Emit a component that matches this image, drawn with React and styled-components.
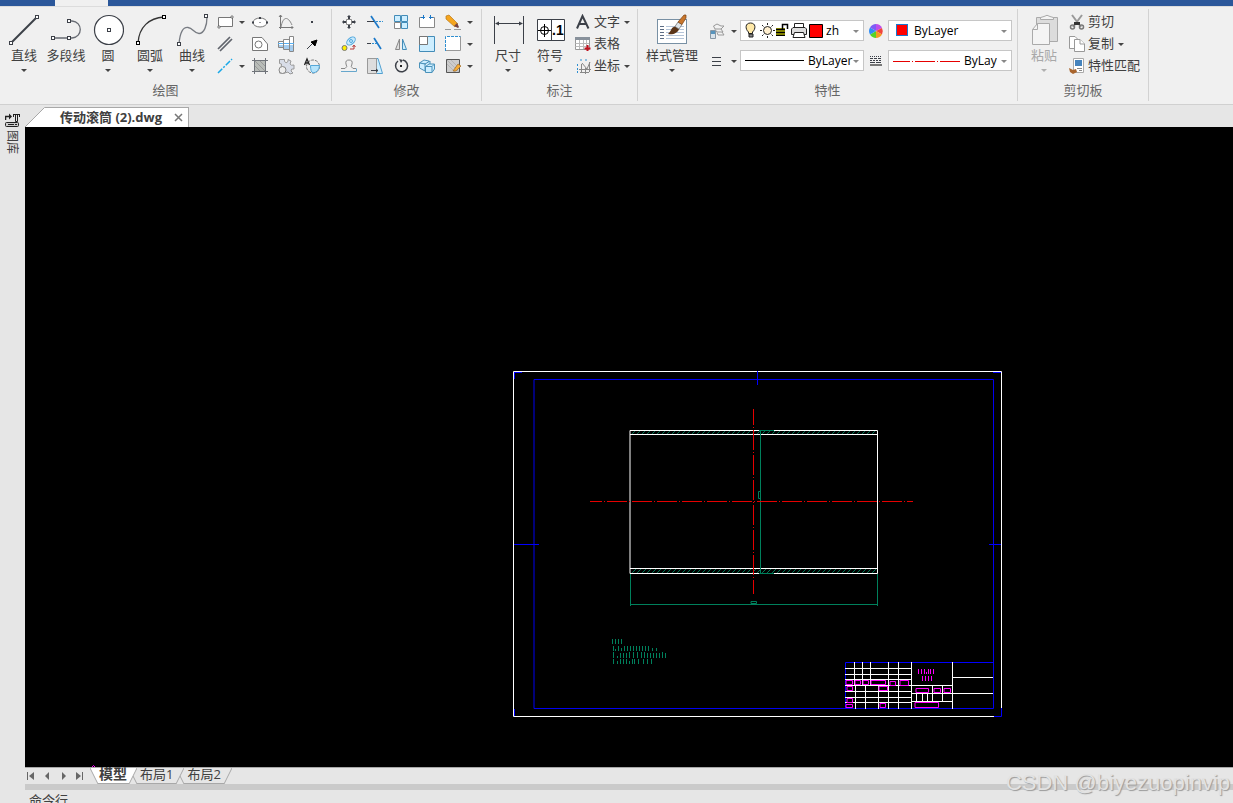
import React from 'react';
import styled, { createGlobalStyle, css } from 'styled-components';

const GlobalStyle = createGlobalStyle`
    * {
        box-sizing: border-box;
    }

    body {
        margin: 0;
        background: #e6e6e6;
        color: #404040;
        font-family: "Open Sans", "Noto Sans CJK SC", sans-serif;
        font-size: 13px;
    }

    button, select {
        font: inherit;
        color: inherit;
        background: none;
        border: 0;
        padding: 0;
    }

    svg {
        display: block;
        flex: none;
    }
`;

const Page = styled.div`
    display: flex;
    flex-direction: column;
    height: 100vh;
    overflow: hidden;
    position: relative;
`;

/* RIBBON */

const TitleStrip = styled.div`
    flex: none;
    height: 6px;
    padding-left: 55px;
    background: #2b579a;
`;

const ActiveMark = styled.div`
    width: 53px;
    height: 6px;
    background: #f0f0f0;
`;

const Ribbon = styled.header`
    display: flex;
    flex: none;
    padding: 2px 0 3px;
    background: #f0f0f0;
    border-top: 1px solid #dcdcdc;
    border-bottom: 1px solid #d0d0d0;
`;

const Group = styled.section`
    display: flex;
    flex-direction: column;
    border-right: 1px solid #d2d2d2;
`;

const GroupBody = styled.div`
    display: flex;
    height: 72px;
    padding: 0 ${props => props.$right}px 0 ${props => props.$left}px;
`;

const GroupTitle = styled.h2`
    margin: 0;
    padding-bottom: 2px;
    font-size: 13px;
    font-weight: 400;
    line-height: 18px;
    text-align: center;
    color: #666;
`;

const BigButton = styled.button`
    display: flex;
    flex-direction: column;
    align-items: center;
    width: ${props => (props.$wide ? 68 : 42)}px;
    padding-top: 5px;
    line-height: 18px;
    white-space: nowrap;

    svg + svg {
        margin-top: 2px;
    }

    &:disabled {
        color: #a8a8a8;
    }
`;

const IconGrid = styled.div`
    display: grid;
    grid-template-columns: ${props => props.$columns};
    grid-auto-rows: 22px;
    padding-top: 2px;
`;

const IconButton = styled.button`
    display: flex;
    align-items: center;
    justify-content: center;
`;

const RowList = styled.div`
    display: flex;
    flex-direction: column;
    padding: 2px 0 0 4px;
`;

const RowButton = styled.button`
    display: flex;
    align-items: center;
    height: 22px;
    line-height: 18px;
    white-space: nowrap;

    span {
        margin: 0 4px 2px 3px;
    }

    span:last-child {
        margin-right: 0;
    }
`;

const PropGrid = styled.div`
    display: grid;
    grid-template-columns: 22px 12px 124px 24px 124px;
    grid-auto-rows: 21px;
    row-gap: 9px;
    padding-top: 11px;
`;

const Combo = styled.label`
    display: flex;
    align-items: center;
    padding: 0 4px;
    background: #fff;
    border: 1px solid #c6c6c6;
    overflow: hidden;

    select {
        flex: 1;
        min-width: 0;
        margin-left: ${props => props.$gap}px;
        margin-right: ${props => props.$end || 0}px;
        appearance: none;
        font-size: 12px;
        line-height: 18px;
        color: #000;
        outline: none;
    }
`;

/* WORK AREA */

const Work = styled.div`
    display: flex;
    flex: 1;
    min-height: 0;
`;

const Rail = styled.aside`
    flex: none;
    width: 25px;
    padding-top: 7px;
`;

const RailButton = styled.button`
    display: flex;
    flex-direction: column;
    align-items: center;
    gap: 2px;

    /* square box, so the turned label keeps its place in the column */
    span {
        width: 24px;
        height: 24px;
        font-size: 12px;
        line-height: 24px;
        transform: rotate(90deg);
    }
`;

const Main = styled.main`
    display: flex;
    flex-direction: column;
    flex: 1;
    min-width: 0;
`;

const FileTabs = styled.div`
    display: flex;
    flex: none;
    align-items: flex-end;
    height: 22px;
`;

const FileTab = styled.div`
    display: flex;
    align-items: center;
    gap: 12px;
    height: 20px;
    padding: 0 5px 2px 15px;
    background: #fff;
    border-top: 1px solid #a8a8a8;
    border-right: 1px solid #a8a8a8;
    font-weight: 700;
    line-height: 16px;
    white-space: nowrap;

    button {
        padding-top: 2px;
    }
`;

const Canvas = styled.div`
    flex: 1;
    min-height: 0;
    background: #000;
    overflow: hidden;

    svg {
        width: 100%;
        height: 100%;
    }
`;

const SheetBar = styled.div`
    display: flex;
    flex: none;
    height: 17px;
    border-top: 1px solid #a8a8a8;
`;

const SheetNav = styled.div`
    display: flex;
    align-items: center;
    width: 65px;
`;

const SheetNavButton = styled.button`
    display: flex;
    width: 16px;
    padding-left: 1px;
`;

const SheetTab = styled.button`
    display: flex;
    height: 16px;

    span {
        height: 16px;
        padding: 0 3px;
        line-height: 12px;
        border-bottom: 1px solid #a8a8a8;
        white-space: nowrap;
    }

    & + & {
        margin-left: -4px;
    }

    ${props => props.$active && css`
        font-size: 14px;
        font-weight: 700;

        span {
            padding: 0 2px 0 1px;
            background: #fff;
        }
    `}
`;

const Splitter = styled.div`
    flex: none;
    height: 6px;
    background: #cacaca;
`;

const CommandLine = styled.footer`
    flex: none;
    height: 13px;
    padding-left: 4px;
    line-height: 20px;
    overflow: hidden;
`;

const Watermark = styled.div`
    position: absolute;
    right: 3px;
    bottom: 6px;
    font-family: "Liberation Sans", sans-serif;
    font-size: 22px;
    line-height: 28px;
    color: #e2e2e2;
    text-shadow: 1px 1px 1px #999;
    pointer-events: none;
`;

/* ICONS */

const DARK = '#3c4048';
const BLUE = '#2f8fd0';
const PALE = '#cdeeff';

const Icon = ({ size = 20, children }) => (
    <svg width={size} height={size} viewBox={`0 0 ${size} ${size}`} fill="none" stroke={DARK} aria-hidden="true">
        {children}
    </svg>
);

const Arrow = ({ color = '#444' }) => (
    <svg width="6" height="8" viewBox="0 0 6 8" fill={color} aria-hidden="true">
        <path d="M0 3H6L3 6Z" />
    </svg>
);

// little square handles at the ends of the curves
const Node = ({ x, y }) => <rect x={x - 1.5} y={y - 1.5} width="3" height="3" fill="#fff" />;

const big = {
    line: <><path d="M3.500 28.500L28.500 3.500" strokeWidth="2" /><Node x={3} y={29} /><Node x={29} y={3} /></>,
    polyline: <><path d="M3 24H19M19 7H22C33 8 33 23 22 24H19" stroke="#666a72" strokeWidth="1.300" /><Node x={19} y={7} /><Node x={3} y={24} /><Node x={19} y={24} /></>,
    circle: <><circle cx="17" cy="16" r="14.500" fill="#fff" strokeWidth="1.200" /><Node x={17} y={16} /></>,
    arc: <><path d="M4 29C5 13 15 4 30 3" stroke="#333" strokeWidth="1.300" /><g stroke="#000"><Node x={4} y={29} /><Node x={30} y={3} /></g></>,
    spline: <><path d="M3 30C4 18 7 13 12 13.500C17 14 18 19.500 23 19.500C28 19.500 31 12 31 3" stroke="#777b82" strokeWidth="1.300" /><Node x={3} y={30} /><Node x={30} y={2} /></>,
    dim: (
        <>
            <path d="M2.500 2V30M31.500 2V30M4 9.500H30" />
            <path d="M3 9.500L7 7.500V11.500ZM31 9.500L27 7.500V11.500Z" fill={DARK} stroke="none" />
        </>
    ),
    symbol: (
        <>
            <path d="M3.500 5.500H30.500V26.500H3.500ZM17.500 5.500V26.500" fill="#fff" />
            <circle cx="10.500" cy="16.500" r="4" stroke="#000" />
            <path d="M4 16.500H17M10.500 10V23" stroke="#000" />
            <text x="18" y="21" fontSize="14" fontWeight="700" fontFamily="Liberation Sans, sans-serif" fill="#000" stroke="none">.1</text>
        </>
    ),
    style: (
        <>
            <rect x="1.500" y="5.500" width="29" height="24" fill="#fff" stroke="#7890a4" />
            <path d="M4 12.500H8M4 15.500H8M4 18.500H8M4 21.500H8M4 24.500H8" stroke="#5c6c84" />
            <path d="M10 12.500H28M10 15.500H28M10 18.500H28M10 21.500H28M10 24.500H28" stroke="#b4c4d8" />
            <path d="M12 20C15 18 15 13 19 12.500L23 15C22 19 17 21 12 20Z" fill="#5a3418" stroke="none" />
            <path d="M19 12.500L22 8L26 10.500L23 15Z" fill="#dfe4e8" stroke="#666" strokeWidth="0.700" />
            <path d="M22 8L28 1H30V4L26 10.500Z" fill="#c8762c" stroke="#7a4012" strokeWidth="0.700" />
        </>
    ),
    paste: (
        <g stroke="#aaa">
            <path d="M8.500 3.500H29.500V27.500H8.500Z" fill="#dcdcdc" />
            <path d="M12.500 5.500V3.500L16 2.500Q19 0 22 2.500L25.500 3.500V5.500Z" fill="#f4f4f4" />
            <path d="M9.500 9.500H21.500V30.500H4.500V15.500Z" fill="#f4f4f4" />
            <path d="M9.500 9.500V15.500H4.500" />
        </g>
    ),
};

const draw = {
    rect: <><path d="M3.500 5.500H17.500V14.500H3.500Z" fill="#fff" stroke="#777" /><path d="M16 4H18V6H16ZM3 14H5V16H3Z" fill="#fff" stroke="#555" strokeWidth="0.700" /></>,
    ellipse: <><ellipse cx="10" cy="10.500" rx="7" ry="4.500" fill="#fff" stroke="#777" /><path d="M2 9.500H4V11.500H2ZM16 9.500H18V11.500H16ZM9 5H11V7H9ZM9.500 10H10.500V11H9.500Z" fill={DARK} stroke="none" /></>,
    graph: <><path d="M4.500 3V17M3 15.500H17M3 5L4.500 3L6 5M15.500 14L17 15.500L15.500 17" stroke="#777" /><path d="M5 15C7 4 12 4 16 13" stroke="#888" /></>,
    point: <path d="M9 9H11V11H9Z" fill={DARK} stroke="none" />,
    double: <path d="M3 15L15 3M5 17L17 5" strokeWidth="1.700" stroke="#60646c" />,
    region: <><path d="M2.500 3.500H12L17.500 10V16.500H2.500Z" fill="#fff" stroke="#777" /><circle cx="8.500" cy="10.500" r="3.500" stroke="#777" /></>,
    shaft: <><path d="M2.500 7.500H7.500V5.500H13.500V2.500H17.500V17.500H13.500V15.500H7.500V13.500H2.500Z" fill="#fff" stroke="#888" /><path d="M3 11H17V17H14V15H8V13H3Z" fill="#a5cdef" stroke="none" /><path d="M2 9.500H18" stroke="#56aef0" /><path d="M7.500 6V15M13.500 3V17" stroke="#888" /></>,
    ray: <><path d="M5 15L11 9" /><path d="M15 6L13 12L9 8Z" fill="#000" stroke="#000" /></>,
    xline: <path d="M3 17L17 3" stroke="#18a8e8" strokeWidth="1.500" strokeDasharray="6 1.500 2 1.500" />,
    hatch: <><path d="M5 5H15V15H5Z" fill="#b8bcb8" stroke="none" /><path d="M5 10L10 15M5 5L15 15M10 5L15 10" stroke="#999" /><path d="M4.500 2V18M15.500 2V18M2 4.500H18M2 15.500H18" stroke="#70747a" /></>,
    gear: <><path d="M3.500 7.500V3.500H8.500V5.500Q10 8 12 5.500V3.500L15 5L14 8Q15 10 18 9V13Q15 12 15 15L17 17L14 18L12 16Q8 18 3.500 17V13Q6 11 5.500 8Z" fill="#d8dde8" stroke="#999" /><circle cx="6.500" cy="14" r="3.500" fill="#eee" stroke="#888" /></>,
    block: <><circle cx="11" cy="10.500" r="6.500" stroke="#777" strokeDasharray="3 1" /><path d="M8.500 9.500H17.500Q17 16 11 17Q8.500 16 8.500 9.500Z" fill="#b6e4fb" stroke="#56a8d8" /><path d="M2.500 9L5 3L7.500 9M3.500 7H6.500" stroke="#222" strokeWidth="1.300" /></>,
};

const modify = {
    move: <><path d="M7.500 7.500H12.500V12.500H7.500Z" stroke="#888" fill="#fff" /><path d="M10 3L12 5H11V7H9V5H8ZM10 17L12 15H11V13H9V15H8ZM3 10L5 8V9H7V11H5V12ZM17 10L15 8V9H13V11H15V12Z" fill={DARK} stroke="none" /></>,
    trim: <><path d="M6 4L14 16" stroke="#1b78c8" strokeWidth="1.700" /><path d="M2 9.500H9" /><path d="M11 9.500H18" stroke={BLUE} strokeDasharray="2 1" /></>,
    array: <><path d="M3.500 3.500H9.500V9.500H3.500ZM10.500 3.500H16.500V9.500H10.500ZM10.500 10.500H16.500V16.500H10.500Z" fill={PALE} stroke="#438cb8" /><path d="M3.500 10.500H9.500V16.500H3.500Z" fill="#fff" stroke="#888" /></>,
    breakAt: <><path d="M7 5.500H2.500V15.500H17.500V5.500H13" fill="#fff" stroke="#888" /><path d="M4 5.500H8M12 5.500H16M6.500 3V7M13.500 3V7" stroke="#1b78c8" /></>,
    erase: <><path d="M3 4L6 3L15 12L12 15L3 7Z" fill="#f5a51e" stroke="#b97818" strokeWidth="0.700" /><path d="M11 14L14 11L16 15L15 16Z" fill="#744" stroke="none" /><path d="M2 17.500H8M11 17.500H18" stroke="#999" /></>,
    copy: <><circle cx="5.500" cy="14" r="2.500" fill="#fff000" stroke="#777" /><ellipse cx="12" cy="7" rx="5" ry="3" transform="rotate(-40 12 7)" fill="#c8eafd" stroke="#52a8dd" /><circle cx="12" cy="7" r="1.500" stroke="#52a8dd" /><path d="M11 15H15V12M13.500 13L15 11L16.500 13" stroke="#b73a3a" /></>,
    extend: <><path d="M9 4L16 15" stroke="#1b78c8" strokeWidth="1.700" /><path d="M2 9.500H6" /><path d="M7 9.500H12" stroke={BLUE} strokeDasharray="2 1" /></>,
    mirror: <><path d="M8.500 5V15.500H4.500Z" fill="#ddd" stroke="#888" /><path d="M11.500 5V15.500H15.500Z" fill={PALE} stroke="#438cb8" /></>,
    scale: <><path d="M2.500 2.500H17.500V17.500H2.500Z" fill={PALE} stroke="#438cb8" /><path d="M2.500 2.500H10.500V10.500H2.500Z" fill="#fff" stroke="#777" /></>,
    stretch: <><path d="M2.500 2.500H17.500V16.500H2.500Z" fill="#fff" stroke="none" /><path d="M17.500 2.500V16.500H2.500" stroke="#999" /><path d="M2.500 17V2.500H17.500" stroke={BLUE} strokeDasharray="3 1" /></>,
    offset: <><path d="M2 12.500H6Q9 11 7 8Q6 4 10 4Q14 4 13 8Q11 11 14 12.500H17" stroke="#888" /><path d="M2 15.500H17.500V12.500" stroke="#67a7cc" /></>,
    taper: <><path d="M11 2.500H13L17.500 17.500H10" fill={PALE} stroke="#52a0d0" /><path d="M2.500 2.500H11.500V17.500H2.500Z" fill="#ddd" stroke="#999" /><path d="M6 14.500H13M11 13L13 14.500L11 16" /></>,
    rotate: <><path d="M7 5A6 6 0 1 0 12 4" strokeWidth="1.500" /><path d="M8 3L12 4L10 7Z" fill={DARK} stroke="none" /><path d="M9 9H11V11H9Z" fill="#222" stroke="none" /></>,
    box: <g stroke="#4b92ba" fill={PALE}><path d="M2.500 7L7 4L12 5L9 8Z" /><path d="M2.500 7V12L8 15V8ZM8 8L13 5V9" /><path d="M8.500 10.500L12 8H17.500V13L15 16.500H8.500ZM8.500 10.500H15V16.500M15 10.500L17.500 8" /></g>,
    hatchEdit: <><path d="M3.500 3.500H16.500V16.500H3.500Z" fill="#ccc" stroke="#555" /><path d="M4 8L12 16M4 4L16 16M8 4L16 12" stroke="#b4b4b4" /><path d="M10 15L15 8L18 10L13 15Z" fill="#f5ad38" stroke="#9d6827" strokeWidth="0.700" /></>,
};

const small = {
    text: <path d="M2 14.500L7.500 2L13.500 14.500M4.500 10H11" strokeWidth="2" />,
    table: <><path d="M0.500 1.500H14.500V13.500H0.500Z" fill="#fff" stroke="#999" /><path d="M0 1H15V4H0Z" fill="#88919b" stroke="none" /><path d="M0.500 7.500H14M0.500 10.500H14M4.500 4V13M8.500 4V13M11.500 4V13" stroke="#bbb" /><path d="M12.500 9V15M9.500 12.500H15.500" stroke="#c1121f" strokeWidth="2" /></>,
    coord: <><path d="M2.500 6V9M2.500 10V15M5 2H7M10 2H13" stroke={BLUE} strokeDasharray="2 1" /><path d="M6.500 6V14M14.500 4V14M4 11.500H16M5 14.500H14M7 5L12 11L15 4M10.500 10V16" stroke="#888" /></>,
    cut: <><path d="M3 1L12 13M13 1L4 13" stroke="#999" strokeWidth="2" /><path d="M5 8H11V11H5Z" fill="#333" stroke="none" /><circle cx="3.500" cy="13" r="2" stroke="#777" strokeWidth="1.500" /><circle cx="12.500" cy="13" r="2" stroke="#777" strokeWidth="1.500" /></>,
    copy: <g stroke="#999" fill="#fff"><path d="M0.500 0.500H6L9.500 4V12.500H0.500Z" /><path d="M5.500 3.500H11L15.500 8V15.500H5.500Z" /><path d="M11 3.500V8H15.500" /></g>,
    match: <><path d="M4.500 0.500H14.500V14.500H4.500Z" fill="#fff" stroke="#aaa" /><path d="M6 2H13V8H6Z" fill="#4583bd" stroke="none" /><path d="M8 10.500H13M10 12.500H13" stroke="#888" /><path d="M0 10L4 12L7 11L8 14L4 16L1 14Z" fill="#a9652d" stroke="none" /></>,
    layer: <><path d="M4.500 3L8 1L12 3H15L12 6H6ZM6 6.500L8 9H14L12 6M8 9.500L9 12H15L13 9" fill="#f2f2f2" stroke="#999" /><path d="M1.500 7.500H6.500V15.500H1.500Z" fill="#d8e2ea" stroke="#8796a4" /><path d="M2 8H6V11H2Z" fill="#5794bd" stroke="none" /></>,
    weight: <path d="M3 4.500H12M3 8.500H12M3 12.500H12" />,
    lineType: <><path d="M2 3.500H14" strokeDasharray="1 1" /><path d="M2 5.500H14" strokeDasharray="3 1" /><path d="M2 7.500H14" strokeDasharray="2 1" /><path d="M2 9.500H14" strokeDasharray="5 1" /><path d="M2 12H14" strokeWidth="2" stroke="#777" /></>,
    wheel: (
        <g stroke="none">
            <path d="M8 8V1A7 7 0 0 1 14 5Z" fill="#c04de8" />
            <path d="M8 8L14 5A7 7 0 0 1 14 11.500Z" fill="#f1443c" />
            <path d="M8 8L14 11.500A7 7 0 0 1 8 15Z" fill="#f49b20" />
            <path d="M8 8V15A7 7 0 0 1 2 11.500Z" fill="#56d326" />
            <path d="M8 8L2 11.500A7 7 0 0 1 2 4.500Z" fill="#2f8df5" />
            <path d="M8 8L2 4.500A7 7 0 0 1 8 1Z" fill="#7e5cf5" />
        </g>
    ),
};

const LayerStates = () => (
    <svg width="79" height="19" viewBox="0 0 79 19" fill="none" stroke="#222" aria-hidden="true">
        <path d="M3.500 11C0 8 0 2 5.500 2C11 2 11 8 7.500 11V12.500H3.500Z" fill="#ffe9a8" />
        <path d="M4 13H8V16H4Z" fill="#888" />
        <circle cx="22.500" cy="9.500" r="4" fill="#ffefcf" />
        <path d="M22.500 2V4M22.500 15V17M15 9.500H17M28 9.500H30M17 4L18.500 5.500M28 4L26.500 5.500M17 15L18.500 13.500M28 15L26.500 13.500" />
        <path d="M31 7H40V15H31Z" fill="#808000" stroke="none" />
        <path d="M31 8.500H40M31 11.500H40M31 14.500H40" stroke="#000" />
        <path d="M37.500 8V3.500H42.500V8" stroke="#000" strokeWidth="1.500" />
        <path d="M49.500 6V2.500H58.500V6" fill="#fff" />
        <path d="M48 6.500H60L61.500 8V13.500H46.500V8Z" fill="#ddd" />
        <path d="M49.500 11.500H58.500L60 16.500H48Z" fill="#fff" />
        <path d="M64.500 3.500H77.500V16.500H64.500Z" fill="#f00" stroke="#000" />
    </svg>
);

/* CAD DRAWING */

const ticks = (y, h, xs) => xs.map(x => `M${x} ${y}v${h}`).join('');
const boxes = list => list.map(([x, y, w, h]) => `M${x} ${y}h${w}v${h}h${-w}z`).join('');

const hatching = (y, h) => {
    let d = '';
    for (let x = 632; x < 873; x += 5) {
        d += `M${x} ${y + h}l${h} ${-h}`;
    }
    return d;
};

const notes = [
    ticks(639, 4, [612, 615, 618, 621]),
    ticks(646, 4, [613, 618, 624, 627, 630, 633, 636, 639, 642, 645, 648]),
    ticks(648, 2, [621, 652, 656]) + ticks(649, 1, [615]),
    ticks(652, 5, [613, 629, 633, 637, 641, 644, 662]),
    ticks(653, 4, [620, 623, 626, 647, 650, 653, 656, 659, 665]) + ticks(656, 1, [617]),
    ticks(659, 4, [613, 620, 623, 626, 632, 634, 638, 643, 647, 651]) + ticks(661, 2, [617, 629]),
].join('');

const labels = [
    [846, 680, 6, 4], [855, 680, 5, 4], [863, 680, 5, 4], [871, 680, 14, 4], [890, 681, 5, 4],
    [900, 680, 8, 5], [847, 686, 5, 4], [879, 686, 8, 4], [847, 698, 5, 4], [846, 704, 6, 3],
    [880, 703, 5, 4], [916, 688, 12, 4], [934, 688, 6, 4], [944, 688, 6, 4], [915, 702, 23, 5],
];

const Drawing = () => (
    <svg role="img" aria-label="传动滚筒">
        <g transform="translate(-24.5 -126.5)" fill="none" strokeLinecap="square">
            <path stroke="#0000f0" d="M534 379H993V708H534Z" />
            <path stroke="#0000ff" d="M514 372H521M514 372V378M514 544H538M989 544H1000M993 372H1000M845 708V662H993" />
            <path stroke="#fff" d="M993 716H513V371H1001V707" />
            <path stroke="#0000ff" d="M757 371V384M1001 708V716H994M514 715V709" />
            <path stroke="#00805c" d={hatching(431, 2) + hatching(569, 3)} />
            <path stroke="#fff" d="M630 430H877V573H630ZM630 434H877M630 568H877" />
            <path stroke="#00805c" d="M760 430V573M759 430H773M759 573H773M760 491H758V498H760M630 574V605M877 574V605M630 604H877M751 601H756V603H751Z" />
            <path stroke="#e60000" strokeLinecap="butt" strokeDasharray="20 2 1 2" strokeDashoffset="8" d="M589.5 501H912.5" />
            <path stroke="#e60000" strokeLinecap="butt" strokeDasharray="20 2 1 2" strokeDashoffset="4" d="M753 408.5V593.5" />
            <path stroke="#00805c" d={notes} />
            <path
                stroke="#fff"
                d="M845 668H911M845 674H911M845 679H911M845 685H952M845 691H911M845 697H911M845 702H911
                   M854 662V685M862 662V685M870 662V685M888 662V708M898 662V708M911 662V708M952 662V708
                   M855 685V708M865 685V708M878 685V708M911 693H992M911 701H952M952 677H992
                   M916 693V701M922 693V701M927 693V701M932 685V701M942 685V701"
            />
            <path stroke="#f0f" d={boxes(labels) + ticks(669, 4, [918, 921, 924, 928, 930, 933]) + ticks(672, 1, [926]) + ticks(676, 4, [922, 925, 928, 931])} />
            <path stroke="#f0f" d="M91 767L93 765L95 767" />
        </g>
    </svg>
);

/* PARTS */

const BigTool = ({ icon, label, wide, noArrow, disabled }) => (
    <BigButton type="button" $wide={wide} disabled={disabled}>
        <Icon size={32}>{big[icon]}</Icon>
        {label}
        {!noArrow && <Arrow color={disabled ? '#b0b0b0' : undefined} />}
    </BigButton>
);

const Tool = ({ children, label }) => (
    <IconButton type="button" aria-label={label}>
        <Icon>{children}</Icon>
    </IconButton>
);

const More = ({ label = '更多' }) => (
    <IconButton type="button" aria-label={label}>
        <Arrow />
    </IconButton>
);

const RowTool = ({ icon, label, arrow }) => (
    <RowButton type="button">
        <Icon size={16}>{small[icon]}</Icon>
        <span>{label}</span>
        {arrow && <Arrow />}
    </RowButton>
);

const DrawGroup = () => (
    <Group>
        <GroupBody $left={3} $right={6}>
            <BigTool icon="line" label="直线" />
            <BigTool icon="polyline" label="多段线" noArrow />
            <BigTool icon="circle" label="圆" />
            <BigTool icon="arc" label="圆弧" />
            <BigTool icon="spline" label="曲线" />
            <IconGrid $columns="24px 10px 26px 26px 26px">
                <Tool label="矩形">{draw.rect}</Tool>
                <More />
                <Tool label="椭圆">{draw.ellipse}</Tool>
                <Tool label="公式曲线">{draw.graph}</Tool>
                <Tool label="点">{draw.point}</Tool>
                <Tool label="平行线">{draw.double}</Tool>
                <i />
                <Tool label="局部放大">{draw.region}</Tool>
                <Tool label="孔轴">{draw.shaft}</Tool>
                <Tool label="箭头">{draw.ray}</Tool>
                <Tool label="中心线">{draw.xline}</Tool>
                <More />
                <Tool label="剖面线">{draw.hatch}</Tool>
                <Tool label="齿轮">{draw.gear}</Tool>
                <Tool label="块">{draw.block}</Tool>
            </IconGrid>
        </GroupBody>
        <GroupTitle>绘图</GroupTitle>
    </Group>
);

const ModifyGroup = () => (
    <Group>
        <GroupBody $left={4} $right={7}>
            <IconGrid $columns="repeat(5, 26px) 8px">
                <Tool label="平移">{modify.move}</Tool>
                <Tool label="裁剪">{modify.trim}</Tool>
                <Tool label="阵列">{modify.array}</Tool>
                <Tool label="打断">{modify.breakAt}</Tool>
                <Tool label="删除">{modify.erase}</Tool>
                <More />
                <Tool label="平移复制">{modify.copy}</Tool>
                <Tool label="延伸">{modify.extend}</Tool>
                <Tool label="镜像">{modify.mirror}</Tool>
                <Tool label="缩放">{modify.scale}</Tool>
                <Tool label="拉伸">{modify.stretch}</Tool>
                <More />
                <Tool label="等距线">{modify.offset}</Tool>
                <Tool label="过渡">{modify.taper}</Tool>
                <Tool label="旋转">{modify.rotate}</Tool>
                <Tool label="分解">{modify.box}</Tool>
                <Tool label="编辑剖面线">{modify.hatchEdit}</Tool>
                <More />
            </IconGrid>
        </GroupBody>
        <GroupTitle>修改</GroupTitle>
    </Group>
);

const AnnotateGroup = () => (
    <Group>
        <GroupBody $left={5} $right={7}>
            <BigTool icon="dim" label="尺寸" />
            <BigTool icon="symbol" label="符号" />
            <RowList>
                <RowTool icon="text" label="文字" arrow />
                <RowTool icon="table" label="表格" />
                <RowTool icon="coord" label="坐标" arrow />
            </RowList>
        </GroupBody>
        <GroupTitle>标注</GroupTitle>
    </Group>
);

const PropertyGroup = () => (
    <Group>
        <GroupBody $left={0} $right={5}>
            <BigTool icon="style" label="样式管理" wide />
            <PropGrid>
                <IconButton type="button" aria-label="图层"><Icon size={16}>{small.layer}</Icon></IconButton>
                <More />
                <Combo $gap={2}>
                    <LayerStates />
                    <select aria-label="当前图层"><option>zh</option></select>
                    <Arrow color="#888" />
                </Combo>
                <IconButton type="button" aria-label="颜色"><Icon size={16}>{small.wheel}</Icon></IconButton>
                <Combo $gap={5}>
                    <svg width="16" height="18" viewBox="0 0 16 18" aria-hidden="true">
                        <rect x="3.500" y="2.500" width="11" height="11" fill="#f00" stroke="#1a78d0" />
                    </svg>
                    <select aria-label="当前颜色"><option>ByLayer</option></select>
                    <Arrow color="#888" />
                </Combo>

                <IconButton type="button" aria-label="线宽"><Icon size={16}>{small.weight}</Icon></IconButton>
                <More />
                <Combo $gap={4}>
                    <svg width="59" height="19" viewBox="0 0 59 19" stroke="#000" aria-hidden="true">
                        <path d="M0 9.500H59" />
                    </svg>
                    <select aria-label="当前线宽"><option>ByLayer</option></select>
                    <Arrow color="#888" />
                </Combo>
                <IconButton type="button" aria-label="线型"><Icon size={16}>{small.lineType}</Icon></IconButton>
                <Combo $gap={4} $end={4}>
                    <svg width="67" height="19" viewBox="0 0 67 19" stroke="#e60000" aria-hidden="true">
                        <path d="M0 10.500H17M19 10.500H20M22 10.500H42M44 10.500H45M47 10.500H67" />
                    </svg>
                    <select aria-label="当前线型"><option>ByLayer</option></select>
                    <Arrow color="#888" />
                </Combo>
            </PropGrid>
        </GroupBody>
        <GroupTitle>特性</GroupTitle>
    </Group>
);

const ClipboardGroup = () => (
    <Group>
        <GroupBody $left={5} $right={8}>
            <BigTool icon="paste" label="粘贴" disabled />
            <RowList>
                <RowTool icon="cut" label="剪切" />
                <RowTool icon="copy" label="复制" arrow />
                <RowTool icon="match" label="特性匹配" />
            </RowList>
        </GroupBody>
        <GroupTitle>剪切板</GroupTitle>
    </Group>
);

const Sheet = ({ name, active }) => (
    <SheetTab type="button" $active={active}>
        {active ? (
            <svg width="8" height="16" viewBox="0 0 8 16"><path d="M0 0H8V16Z" fill="#fff" /><path d="M0 0L8 16" stroke="#a8a8a8" /></svg>
        ) : (
            <svg width="4" height="16" viewBox="0 0 4 16"><path d="M0 8L4 16" stroke="#a8a8a8" /></svg>
        )}
        <span>{name}</span>
        <svg width="8" height="16" viewBox="0 0 8 16">
            {active && <path d="M0 0H8L0 16Z" fill="#fff" />}
            <path d="M8 0L0 16" stroke="#a8a8a8" />
        </svg>
    </SheetTab>
);

const navShapes = [
    ['第一页', 'M1 1H2V9H1ZM8 1V9L3 5Z'],
    ['上一页', 'M7 1V9L3 5Z'],
    ['下一页', 'M4 1V9L8 5Z'],
    ['最后一页', 'M2 1V9L7 5ZM8 1H9V9H8Z'],
];

export default function App() {
    return (
        <Page>
            <GlobalStyle />
            <TitleStrip><ActiveMark /></TitleStrip>
            <Ribbon>
                <DrawGroup />
                <ModifyGroup />
                <AnnotateGroup />
                <PropertyGroup />
                <ClipboardGroup />
            </Ribbon>

            <Work>
                <Rail>
                    <RailButton type="button">
                        <svg width="15" height="16" viewBox="0 0 15 16" fill="none" stroke="#222" aria-hidden="true">
                            <path d="M0.500 8V4.500H5" strokeWidth="1.500" />
                            <path d="M4 1.500L7 4.500L4 7.500Z" fill="#222" stroke="none" />
                            <path d="M8 2.500H15M8.500 2V5M14.500 2V5M10.500 3V9.500H12.500V3" />
                            <rect x="0.500" y="10.500" width="13" height="4" rx="1" fill="#ccc" />
                            <path d="M3 12.500H9M10 12.500H12" />
                        </svg>
                        <span>图库</span>
                    </RailButton>
                </Rail>

                <Main>
                    <FileTabs>
                        <svg width="20" height="20" viewBox="0 0 20 20" aria-hidden="true">
                            <path d="M0 20L20 0V20Z" fill="#fff" />
                            <path d="M0 20L19.500 0.500H20" fill="none" stroke="#a8a8a8" />
                        </svg>
                        <FileTab>
                            传动滚筒 (2).dwg
                            <button type="button" aria-label="关闭">
                                <svg width="9" height="9" viewBox="0 0 9 9" stroke="#777" strokeWidth="1.500">
                                    <path d="M1 1L8 8M8 1L1 8" />
                                </svg>
                            </button>
                        </FileTab>
                    </FileTabs>

                    <Canvas><Drawing /></Canvas>

                    <SheetBar>
                        <SheetNav>
                            {navShapes.map(([label, d]) => (
                                <SheetNavButton key={label} type="button" aria-label={label}>
                                    <svg width="10" height="10" viewBox="0 0 10 10" fill="#666"><path d={d} /></svg>
                                </SheetNavButton>
                            ))}
                        </SheetNav>
                        <Sheet name="模型" active />
                        <Sheet name="布局1" />
                        <Sheet name="布局2" />
                    </SheetBar>
                    <Splitter />
                    <CommandLine>命令行</CommandLine>
                </Main>
            </Work>

            <Watermark>CSDN @biyezuopinvip</Watermark>
        </Page>
    );
}
